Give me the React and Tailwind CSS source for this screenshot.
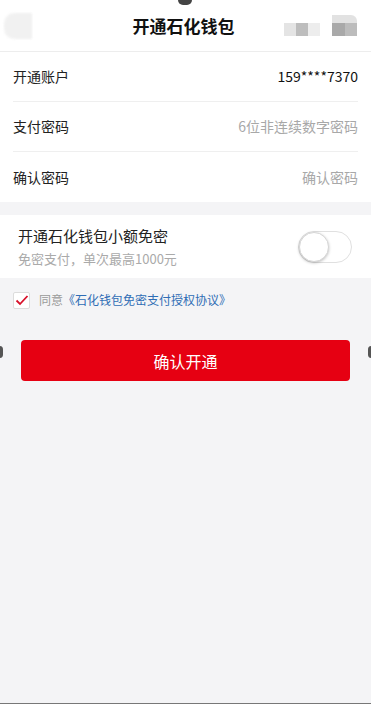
const font = { fontFamily: '"Noto Sans CJK SC", "Liberation Sans", sans-serif' };

const Row = ({ label, value, dark, last }) => (
    <div className="px-[13px]">
        <div className={`flex items-center justify-between h-[50px] ${last ? '' : 'border-b border-[#efefef]'}`}>
            <span className="text-[14px] text-[#222]">{label}</span>
            <span className={`text-[14px] ${dark ? 'text-[#111]' : 'text-[#a8a8a8]'}`}>{value}</span>
        </div>
    </div>
);

const App = () => {
    return (
        <div className="w-[371px] h-[704px] bg-[#f4f4f6] relative overflow-hidden" style={font}>
            {/* header */}
            <header className="h-[52px] bg-white flex items-center px-[4px] border-b border-[#ededed]">
                <div className="flex-1 flex">
                    <div className="w-[28px] h-[26px] rounded-l-[10px] bg-[#ececec] opacity-70 blur-[1px]" />
                </div>
                <h1 className="text-[17px] font-bold text-[#111] ml-[6px]">开通石化钱包</h1>
                <div className="flex-1 flex items-end justify-end gap-[12px] pr-[10px]">
                    <div className="flex h-[13px]">
                        <div className="w-[12px] bg-[#e4e4e4]" />
                        <div className="w-[12px] bg-[#bdbdbd]" />
                        <div className="w-[12px] bg-[#ededed]" />
                    </div>
                    <div className="flex flex-col w-[25px]">
                        <div className="h-[8px] bg-[#e2e2e2] rounded-tr-[6px]" />
                        <div className="flex h-[13px]">
                            <div className="w-[13px] bg-[#a9a9a9]" />
                            <div className="w-[12px] bg-[#bcbcbc]" />
                        </div>
                    </div>
                </div>
            </header>
            <div className="absolute top-0 left-[178px] w-[14px] h-[5px] rounded-b-full bg-[#444]" />

            {/* form */}
            <section className="bg-white">
                <Row label="开通账户" value="159****7370" dark />
                <Row label="支付密码" value="6位非连续数字密码" />
                <Row label="确认密码" value="确认密码" last />
            </section>

            {/* free-password */}
            <section className="bg-white mt-[13px] h-[63px] flex items-center justify-between pl-[18px] pr-[19px]">
                <div className="flex flex-col">
                    <span className="text-[15px] text-[#222] leading-[22px]">开通石化钱包小额免密</span>
                    <span className="text-[13px] text-[#aaa] leading-[20px] mt-[2px]">免密支付，单次最高1000元</span>
                </div>
                <div className="w-[54px] h-[32px] rounded-full border border-[#e0e0e0] bg-white relative">
                    <div className="absolute left-0 top-0 w-[30px] h-[30px] rounded-full bg-white border border-[#d6d6d6] shadow-[0_1px_3px_rgba(0,0,0,0.25)]" />
                </div>
            </section>

            {/* agreement */}
            <div className="flex items-center pl-[13px] mt-[13px] gap-[9px]">
                <div className="w-[17px] h-[17px] border border-[#dcdcdc] bg-white rounded-[2px] flex items-center justify-center">
                    <svg width="14" height="12" viewBox="0 0 14 12">
                        <path d="M1.5 6.5 L5 10 L12.5 2" fill="none" stroke="#d8102a" strokeWidth="1.8" />
                    </svg>
                </div>
                <span className="text-[12px] text-[#999]">同意<span className="text-[#2f6db5]">《石化钱包免密支付授权协议》</span></span>
            </div>

            {/* button */}
            <div className="px-[21px] mt-[31px]">
                <button className="w-full h-[41px] bg-[#e60012] rounded-[4px] text-white text-[16px]">确认开通</button>
            </div>

            <div className="absolute left-[-4px] top-[346px] w-[7px] h-[12px] rounded-full bg-[#555]" />
            <div className="absolute right-[-4px] top-[346px] w-[7px] h-[12px] rounded-full bg-[#555]" />
            <div className="absolute bottom-0 left-0 w-full h-[1px] bg-[#777]" />
        </div>
    );
};

export default App;
